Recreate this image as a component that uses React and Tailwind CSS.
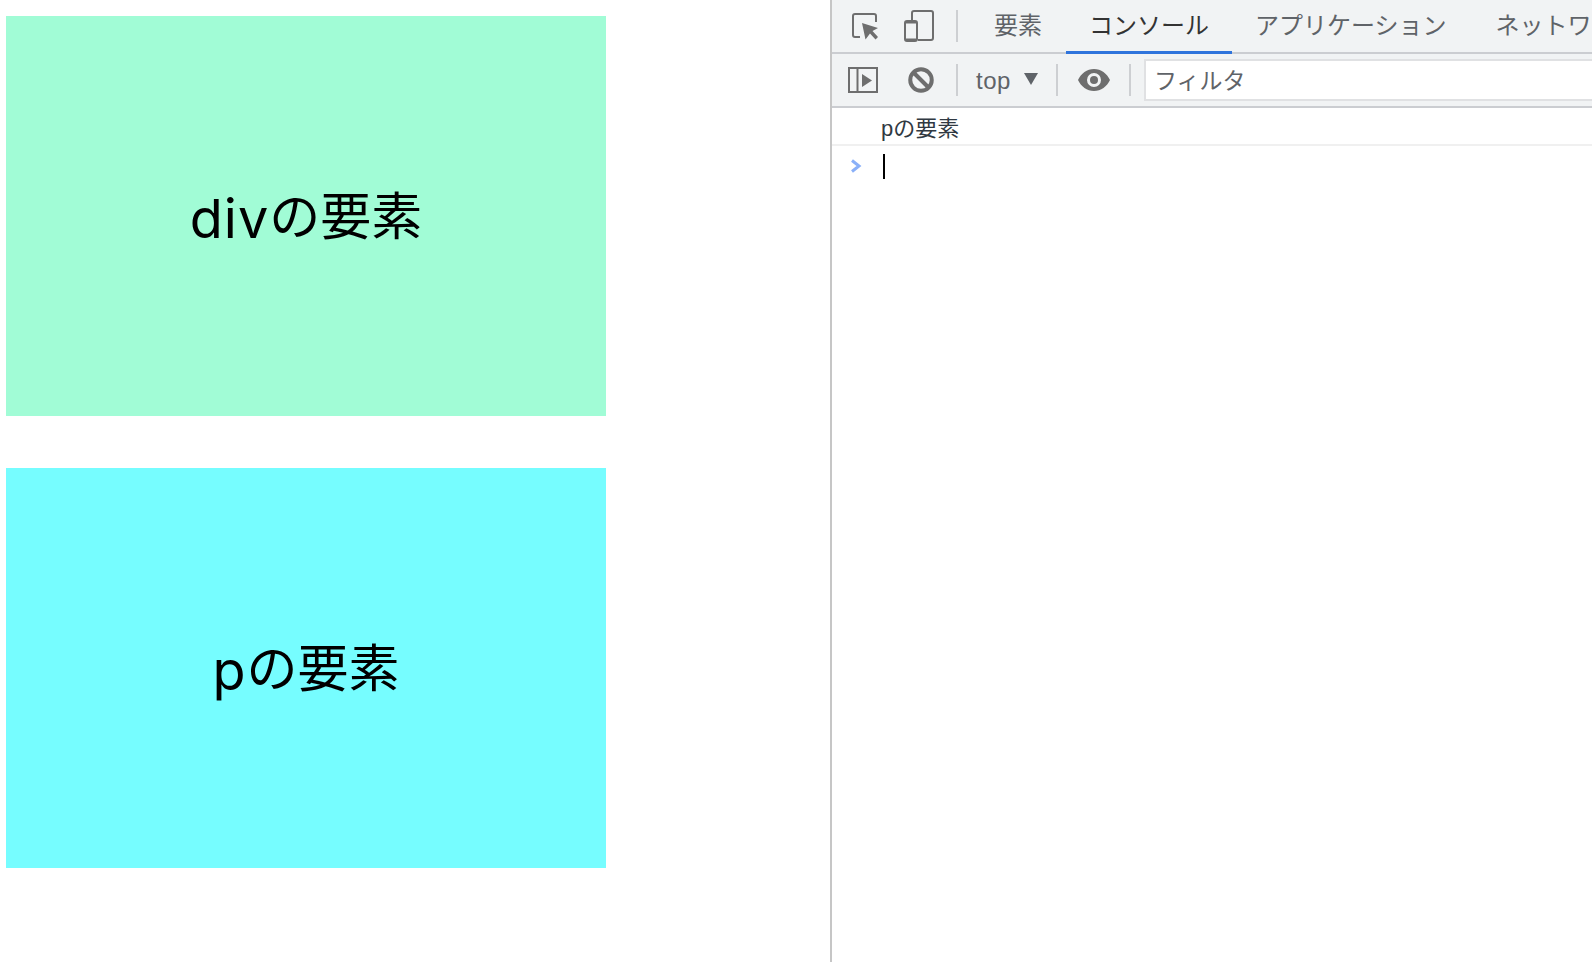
const jp = "font-['Liberation_Sans','Noto_Sans_CJK_JP',sans-serif]";
const latin = "font-['Inter','Liberation_Sans',sans-serif]";
const ICON = "#6e6e6e";

function Sep() {
  return <div className="w-[2px] h-8 bg-[#cdcfd2] shrink-0" />;
}

function InspectIcon() {
  return (
    <svg width="28" height="28" viewBox="0 0 28 28" className="shrink-0">
      <path d="M8 24H3a2 2 0 0 1-2-2V3a2 2 0 0 1 2-2h19a2 2 0 0 1 2 2v6" fill="none" stroke={ICON} strokeWidth="2" />
      <path d="M10 10l16 5-5.500 3 5.500 6-2.500 2.500-5.500-6-4.500 6z" fill={ICON} />
    </svg>
  );
}

function DeviceIcon() {
  return (
    <svg width="30" height="32" viewBox="0 0 30 32" className="shrink-0">
      <path d="M8 10V3a2 2 0 0 1 2-2h17a2 2 0 0 1 2 2v25a2 2 0 0 1-2 2H14" fill="none" stroke={ICON} strokeWidth="2" />
      <rect x="1" y="11" width="12" height="20" rx="2" fill="none" stroke={ICON} strokeWidth="2" />
      <rect x="1" y="11" width="12" height="2.500" fill={ICON} />
      <rect x="1" y="28.500" width="12" height="2.500" fill={ICON} />
    </svg>
  );
}

function SidebarIcon() {
  return (
    <svg width="30" height="26" viewBox="0 0 30 26" className="shrink-0">
      <rect x="1" y="1" width="28" height="24" fill="none" stroke={ICON} strokeWidth="2" />
      <path d="M9.500 1v24" stroke={ICON} strokeWidth="2" />
      <path d="M14 7l10 6.500-10 6.500z" fill={ICON} />
    </svg>
  );
}

function BlockIcon() {
  return (
    <svg width="26" height="26" viewBox="0 0 26 26" className="shrink-0">
      <circle cx="13" cy="13" r="10.750" fill="none" stroke={ICON} strokeWidth="4" />
      <path d="M5.500 5.500l15 15" stroke={ICON} strokeWidth="4" />
    </svg>
  );
}

function EyeIcon() {
  return (
    <svg width="32" height="22" viewBox="0 0 32 22" className="shrink-0">
      <path fillRule="evenodd" fill={ICON} d="M16 0C9 0 3 4.500 0 11c3 6.500 9 11 16 11s13-4.500 16-11C29 4.500 23 0 16 0zm0 18a7 7 0 1 1 0-14 7 7 0 0 1 0 14z" />
      <circle cx="16" cy="11" r="4" fill={ICON} />
    </svg>
  );
}

function Tab({ label, active, extra = "" }) {
  return (
    <div className={`h-[54px] px-[23px] flex items-center shrink-0 whitespace-nowrap text-[24px] border-b-[3px] ${extra} ${active ? "text-[#333333] border-[#2f74dc]" : "text-[#5f6368] border-transparent"}`}>
      {label}
    </div>
  );
}

function Box({ color, latinText, cjk }) {
  return (
    <div className={`w-[600px] h-[400px] shrink-0 flex items-center justify-center pt-[5px] text-[51px] text-black ${color}`}>
      <span className={`text-[54px] tracking-[1px] ${latin}`}>{latinText}</span>
      <span>{cjk}</span>
    </div>
  );
}

export default function App() {
  return (
    <div className={`h-[962px] w-full flex overflow-hidden bg-white ${jp}`}>
      <div className="w-[830px] shrink-0 pl-[6px] pt-[16px] flex flex-col gap-[52px]">
        <Box color="bg-[#a1fcd6]" latinText="div" cjk="の要素" />
        <Box color="bg-[#76fdff]" latinText="p" cjk="の要素" />
      </div>
      <div className="flex-1 min-w-0 border-l-2 border-[#c6c6c6] flex flex-col">
        <div className="h-[54px] shrink-0 bg-[#f1f3f4] relative flex items-center pl-[20px] overflow-hidden">
          <div className="absolute left-0 right-0 bottom-0 h-[2px] bg-[#cbcdd1]" />
          <div className="relative flex items-center w-full pb-[2px]">
            <div className="mt-[2px]"><InspectIcon /></div>
            <div className="ml-[24px]"><DeviceIcon /></div>
            <div className="ml-[22px]"><Sep /></div>
            <div className="ml-[14px] flex -mb-[2px]">
              <Tab label="要素" extra="-ml-[1px] pr-[24px]" />
              <Tab label="コンソール" active />
              <Tab label="アプリケーション" />
              <Tab label="ネットワ" extra="ml-[3px]" />
            </div>
          </div>
        </div>
        <div className="h-[54px] shrink-0 bg-[#f1f3f4] border-b-2 border-[#cbcdd1] flex items-center pl-[16px] text-[#5f6368]">
          <SidebarIcon />
          <div className="ml-[30px]"><BlockIcon /></div>
          <div className="ml-[22px]"><Sep /></div>
          <span className="ml-[18px] text-[24px] tracking-[0.5px] pt-[2px]">top</span>
          <div className="ml-[13px] mt-[-2px] w-0 h-0 border-x-[7px] border-x-transparent border-t-[12px] border-t-[#5f6368]" />
          <div className="ml-[18px]"><Sep /></div>
          <div className="ml-[20px]"><EyeIcon /></div>
          <div className="ml-[19px]"><Sep /></div>
          <div className="ml-[13px] flex-1 h-[42px] mb-[1px] bg-white border-2 border-[#e0e1e3] border-r-0 flex items-center pl-[8px] pt-[3px] text-[23px]">フィルタ</div>
        </div>
        <div className="h-[38px] shrink-0 border-b-2 border-[#f0f0f0] flex items-center pl-[49px] pt-[5px] text-[22px] leading-none text-[#303942]">
          pの要素
        </div>
        <div className="flex items-start pl-[18px] pt-[8px]">
          <svg width="12" height="14" viewBox="0 0 12 14" className="shrink-0 mt-[5px]">
            <path d="M2 1.500L9 7l-7 5.500" fill="none" stroke="#8ab0f8" strokeWidth="3" />
          </svg>
          <div className="ml-[21px] w-[2px] h-[25px] bg-black" />
        </div>
      </div>
    </div>
  );
}
